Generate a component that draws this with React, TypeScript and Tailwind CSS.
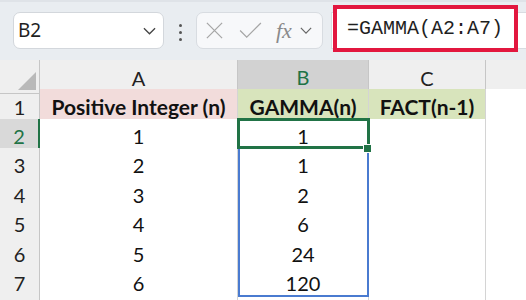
import React from 'react';

const rows = [
  { n: '1', a: '1', b: '1' },
  { n: '2', a: '2', b: '1' },
  { n: '3', a: '3', b: '2' },
  { n: '4', a: '4', b: '6' },
  { n: '5', a: '5', b: '24' },
  { n: '6', a: '6', b: '120' },
];

const rowHeights = ['h-[29px]', 'h-[30px]', 'h-[29px]', 'h-[30px]', 'h-[29px]', 'h-[30px]', 'h-[29px]', 'h-[30px]', 'h-[10px]'];

function Chevron({ className }: { className?: string }) {
  return (
    <svg viewBox="0 0 14 8" className={className} fill="none" stroke="currentColor" strokeWidth="1.4">
      <path d="M1 1l6 6 6-6" />
    </svg>
  );
}

function Toolbar() {
  return (
    <div className="h-[60px] bg-[#e9edf1] border-t-2 border-[#dfe3e8] flex items-start relative">
      <div className="mt-[10px] ml-[13px] w-[151px] h-[37px] bg-white border border-[#d3d7dc] rounded-[7px] flex items-center pl-[4px] pr-[7px]">
        <span className="text-[19px] text-[#1f1f1f] leading-none" style={{ fontFamily: '"Noto Sans", sans-serif' }}>B2</span>
        <Chevron className="ml-auto w-[13px] h-[8px] text-[#444]" />
      </div>
      <div className="mt-[22px] ml-[15px] flex flex-col gap-[4px]">
        <span className="w-[3px] h-[3px] bg-[#555] rounded-full" />
        <span className="w-[3px] h-[3px] bg-[#555] rounded-full" />
        <span className="w-[3px] h-[3px] bg-[#555] rounded-full" />
      </div>
      <div className="mt-[10px] ml-[14px] w-[127px] h-[37px] bg-[#f7f8fa] border border-[#d8dce1] rounded-[7px] flex items-center pl-[8px]">
        <svg viewBox="0 0 20 20" className="w-[19px] h-[19px] text-[#a6a6a6]" fill="none" stroke="currentColor" strokeWidth="1.3">
          <path d="M2 2l16 16M18 2L2 18" />
        </svg>
        <svg viewBox="0 0 24 18" className="ml-[15px] w-[23px] h-[17px] text-[#a6a6a6]" fill="none" stroke="currentColor" strokeWidth="1.3">
          <path d="M1 9l7 7L23 1" />
        </svg>
        <span className="ml-[14px] text-[22px] italic text-[#8a8a8a] leading-none" style={{ fontFamily: '"Liberation Serif", serif' }}>fx</span>
        <Chevron className="ml-[8px] w-[12px] h-[7px] text-[#666]" />
      </div>
      <div className="mt-[10px] ml-[8px] flex-1 h-[37px] bg-white border border-[#d8dce1] border-r-0" />
      <div className="absolute left-[333px] top-[3px] w-[185px] h-[47px] border-[4px] border-[#e2173f] bg-white flex items-center pl-[10px]">
        <span className="text-[20px] text-[#1f1f1f] leading-none" style={{ fontFamily: '"Liberation Mono", monospace' }}>=GAMMA(A2:A7)</span>
      </div>
    </div>
  );
}

function Grid() {
  const cols = 'grid grid-cols-[40px_198px_131px_117px_40px]';
  const font = { fontFamily: 'Lato, "Liberation Sans", sans-serif' };
  return (
    <div className="relative" style={font}>
      {/* column headers */}
      <div className={`${cols} ${rowHeights[0]}`}>
        <div className="bg-[#efefef] border-r border-b border-[#c6c6c6] relative">
          <svg viewBox="0 0 20 20" className="absolute right-[3px] bottom-[3px] w-[18px] h-[18px]">
            <path d="M20 0V20H0Z" fill="#b9b9b9" />
          </svg>
        </div>
        <div className="bg-[#efefef] border-r border-b border-[#c6c6c6] flex items-center justify-center pt-[2px] text-[20px] text-[#222]">A</div>
        <div className="bg-[#d2d2d2] border-r border-[#c6c6c6] border-b-2 border-b-[#217346] flex items-center justify-center pt-[2px] text-[20px] text-[#217346]">B</div>
        <div className="bg-[#efefef] border-r border-b border-[#c6c6c6] flex items-center justify-center pt-[2px] text-[20px] text-[#222]">C</div>
        <div className="bg-[#efefef] border-b border-[#c6c6c6]" />
      </div>
      {/* row 1 */}
      <div className={`${cols} ${rowHeights[1]}`}>
        <div className="bg-[#efefef] border-r border-b border-[#c6c6c6] flex items-center justify-center pt-[2px] text-[20px] text-[#222]">1</div>
        <div className="bg-[#f2dcdb] border-r border-b border-[#d4d4d4] flex items-center justify-center pt-[2px] text-[21px] font-bold text-[#111] whitespace-nowrap">Positive Integer (n)</div>
        <div className="bg-[#d8e4bc] border-r border-b border-[#d4d4d4] flex items-center justify-center pt-[2px] text-[21px] font-bold text-[#111]">GAMMA(n)</div>
        <div className="bg-[#d8e4bc] border-r border-b border-[#d4d4d4] flex items-center justify-center pt-[2px] text-[21px] font-bold text-[#111]">FACT(n-1)</div>
        <div className="bg-white border-b border-[#d4d4d4]" />
      </div>
      {rows.map((r, i) => (
        <div key={r.n} className={`${cols} ${rowHeights[i + 2]}`}>
          <div
            className={
              i === 0
                ? 'bg-[#d9d9d9] border-b border-[#c6c6c6] border-r-2 border-r-[#217346] flex items-center justify-center pt-[2px] text-[20px] text-[#217346]'
                : 'bg-[#efefef] border-r border-b border-[#c6c6c6] flex items-center justify-center pt-[2px] text-[20px] text-[#222]'
            }
          >
            {i + 2}
          </div>
          <div className="bg-white border-r border-b border-[#d4d4d4] flex items-center justify-center pt-[2px] text-[20px] text-[#111]">{r.a}</div>
          <div className="bg-white border-r border-b border-[#d4d4d4] flex items-center justify-center pt-[2px] text-[20px] text-[#111]">{r.b}</div>
          <div className="bg-white border-r border-b border-[#d4d4d4]" />
          <div className="bg-white border-b border-[#d4d4d4]" />
        </div>
      ))}
      <div className={`${cols} ${rowHeights[8]}`}>
        <div className="bg-[#efefef] border-r border-[#c6c6c6]" />
        <div className="bg-white border-r border-[#d4d4d4]" />
        <div className="bg-white border-r border-[#d4d4d4]" />
        <div className="bg-white border-r border-[#d4d4d4]" />
        <div className="bg-white" />
      </div>
      {/* selected range B2:B7 */}
      <div className="absolute left-[238px] top-[58px] w-[131px] h-[179px] border-2 border-[#4a7bd0] pointer-events-none" />
      {/* active cell B2 */}
      <div className="absolute left-[237px] top-[58px] w-[133px] h-[31px] border-[3px] border-[#217346] pointer-events-none" />
      <div className="absolute left-[363px] top-[84px] w-[9px] h-[9px] bg-[#217346] border border-white pointer-events-none" />
    </div>
  );
}

export default function App() {
  return (
    <div className="w-[526px] h-[300px] overflow-hidden bg-white">
      <Toolbar />
      <Grid />
    </div>
  );
}
